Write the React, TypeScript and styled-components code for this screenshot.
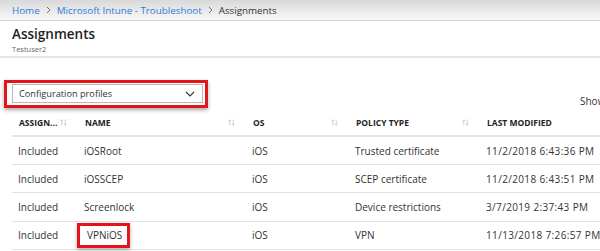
import React from "react";
import styled, { createGlobalStyle } from "styled-components";

const GlobalStyle = createGlobalStyle`
    html, body {
        margin: 0;
        padding: 0;
        background: #ffffff;
        overflow: hidden;
    }
    body {
        font-family: "Open Sans", "Noto Sans", "Liberation Sans", sans-serif;
        color: #333333;
    }
`;

interface Assignment {
    id: number,
    assignment: string,
    name: string,
    os: string,
    policyType: string,
    lastModified: string,
    highlighted?: boolean
}

const rows: Array<Assignment> = [
    { id: 1, assignment: "Included", name: "iOSRoot", os: "iOS", policyType: "Trusted certificate", lastModified: "11/2/2018 6:43:36 PM" },
    { id: 2, assignment: "Included", name: "iOSSCEP", os: "iOS", policyType: "SCEP certificate", lastModified: "11/2/2018 6:43:51 PM" },
    { id: 3, assignment: "Included", name: "Screenlock", os: "iOS", policyType: "Device restrictions", lastModified: "3/7/2019 2:37:43 PM" },
    { id: 4, assignment: "Included", name: "VPNiOS", os: "iOS", policyType: "VPN", lastModified: "11/13/2018 7:26:57 PM", highlighted: true }
];

const columns = [
    { label: "ASSIGN...", sortable: true },
    { label: "NAME", sortable: true },
    { label: "OS", sortable: true },
    { label: "POLICY TYPE", sortable: true },
    { label: "LAST MODIFIED", sortable: false }
];

const Page = styled.div`
    width: 600px;
    height: 251px;
    overflow: hidden;
`;

const Breadcrumb = styled.nav`
    height: 21px;
    box-sizing: border-box;
    display: flex;
    align-items: center;
    gap: 6px;
    padding-left: 12px;
    background: linear-gradient(#d9d9d9, #f8f8f8);
    border-bottom: 1px solid #d6d6d6;
    font-size: 9.8px;
`;

const Crumb = styled.span<{ $current?: boolean }>`
    color: ${p => p.$current ? "#333333" : "#2f7bd8"};
`;

const Header = styled.header`
    height: 37px;
    box-sizing: border-box;
    padding: 4px 12px 0;
    border-bottom: 2px solid #e4e4e4;
`;

const Title = styled.h1`
    margin: 0;
    font-size: 13.5px;
    font-weight: 600;
    line-height: 19px;
    color: #1e1e1e;
`;

const SubTitle = styled.div`
    font-size: 7.5px;
    line-height: 10px;
    color: #666666;
`;

const Toolbar = styled.div`
    display: flex;
    justify-content: space-between;
    align-items: flex-end;
    padding: 22px 0 0 4px;
`;

const Callout = styled.div`
    border: 3px solid #e3151b;
    padding: 1px 2px 2px 5px;
    box-shadow: 0 2px 4px rgba(0, 0, 0, 0.35);
    display: inline-flex;
`;

const Select = styled.div`
    width: 191px;
    height: 19px;
    box-sizing: border-box;
    border: 1px solid #b8b8b8;
    display: flex;
    align-items: center;
    justify-content: space-between;
    padding: 0 7px 0 6px;
    font-size: 9.2px;
    color: #333333;
`;

const Show = styled.span`
    font-size: 10px;
    color: #333333;
    margin-right: -20px;
    width: 40px;
    line-height: 14px;
    white-space: nowrap;
`;

const Table = styled.div`
    margin: 3px 0 0 12px;
    display: grid;
    grid-template-columns: 66px 168px 103px 131px 1fr;
`;

const HeadCell = styled.div`
    height: 26px;
    box-sizing: border-box;
    border-bottom: 2px solid #e4e4e4;
    display: flex;
    align-items: center;
    justify-content: space-between;
    padding: 0 11px 2px 7px;
    font-size: 8.5px;
    font-weight: 700;
    color: #222222;
    white-space: nowrap;
`;

const Cell = styled.div<{ $numeric?: boolean }>`
    height: 28.2px;
    box-sizing: border-box;
    border-bottom: 1px solid #e1e1e1;
    display: flex;
    align-items: center;
    padding-left: 6px;
    font-size: 10px;
    letter-spacing: ${p => p.$numeric ? "0.35px" : "0"};
    color: #333333;
    white-space: nowrap;
`;

const Marked = styled.span`
    border: 3px solid #e3151b;
    padding: 2px 5px 3px 7px;
    margin-left: -7px;
    box-shadow: 0 2px 4px rgba(0, 0, 0, 0.3);
    line-height: 14px;
`;

const SortIcon = () => (
    <svg width="7" height="7" viewBox="0 0 7 7" fill="none" stroke="#c2c2c2" strokeWidth="0.8">
        <path d="M1.8 6.5V0.8M0.6 2L1.8 0.8L3 2" />
        <path d="M5.2 0.5V6.2M4 5L5.2 6.2L6.4 5" />
    </svg>
);

const ChevronDown = () => (
    <svg width="10" height="6" viewBox="0 0 10 6" fill="none" stroke="#333" strokeWidth="1.1">
        <path d="M1 1L5 5L9 1" />
    </svg>
);

const ChevronRight = () => (
    <svg width="5" height="8" viewBox="0 0 5 8" fill="none" stroke="#666" strokeWidth="0.9">
        <path d="M1 1L4 4L1 7" />
    </svg>
);

const App: React.FC = () => {
    return (
        <Page>
            <GlobalStyle />
            <Breadcrumb>
                <Crumb>Home</Crumb>
                <ChevronRight />
                <Crumb>Microsoft Intune - Troubleshoot</Crumb>
                <ChevronRight />
                <Crumb $current>Assignments</Crumb>
            </Breadcrumb>
            <Header>
                <Title>Assignments</Title>
                <SubTitle>Testuser2</SubTitle>
            </Header>
            <Toolbar>
                <Callout>
                    <Select>
                        Configuration profiles
                        <ChevronDown />
                    </Select>
                </Callout>
                <Show>Show</Show>
            </Toolbar>
            <Table>
                {columns.map(c => (
                    <HeadCell key={c.label}>
                        {c.label}
                        {c.sortable ? <SortIcon /> : null}
                    </HeadCell>
                ))}
                {rows.map(r => (
                    <React.Fragment key={r.id}>
                        <Cell>{r.assignment}</Cell>
                        <Cell>{r.highlighted ? <Marked>{r.name}</Marked> : r.name}</Cell>
                        <Cell>{r.os}</Cell>
                        <Cell>{r.policyType}</Cell>
                        <Cell $numeric>{r.lastModified}</Cell>
                    </React.Fragment>
                ))}
            </Table>
        </Page>
    );
};

export default App;
